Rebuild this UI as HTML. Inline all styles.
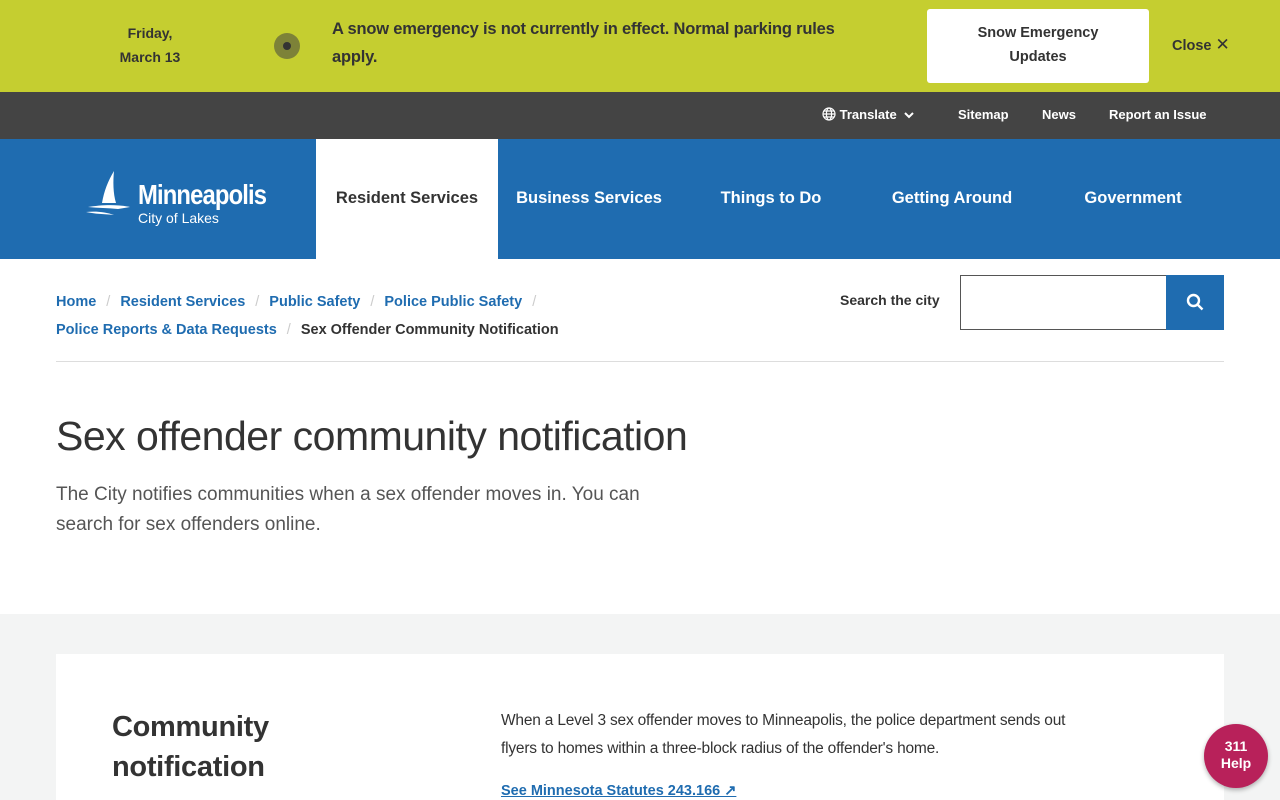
<!DOCTYPE html>
<html><head><meta charset="utf-8"><style>
*{margin:0;padding:0;box-sizing:border-box}
body{width:1280px;height:800px;overflow:hidden;font-family:"Liberation Sans",sans-serif;color:#333;background:#fff;position:relative}
.alert{position:absolute;top:0;left:0;width:1280px;height:92px;background:#c5ce30}
.date{position:absolute;left:100px;top:21px;width:100px;text-align:center;font-weight:bold;font-size:14px;line-height:24px;color:#333}
.dot{position:absolute;left:274px;top:33px;width:26px;height:26px;border-radius:50%;background:#7d8238}
.dot:after{content:"";position:absolute;left:9px;top:9px;width:8px;height:8px;border-radius:50%;background:#333}
.msg{position:absolute;left:332px;top:15px;width:545px;font-size:16.5px;font-weight:bold;line-height:28px;color:#333;letter-spacing:-.2px}
.btn{position:absolute;left:927px;top:9px;width:222px;height:74px;background:#fff;border-radius:3px;text-align:center;font-weight:bold;font-size:14.5px;line-height:24px;padding-top:12px}
.close{position:absolute;left:1172px;top:35px;font-weight:bold;font-size:14.5px}
.util{position:absolute;top:92px;left:0;width:1280px;height:47px;background:#444;color:#fff;font-weight:bold;font-size:13px}
.util span{position:absolute;top:15px}
.nav{position:absolute;top:139px;left:0;width:1280px;height:120px;background:#1f6cb0}
.nav .it{position:absolute;top:0;height:120px;width:182px;line-height:118px;text-align:center;color:#fff;font-weight:bold;font-size:16.5px}
.nav .act{background:#fff;color:#333}
.bc{position:absolute;left:56px;top:288px;font-size:14.5px;font-weight:bold;line-height:28px;color:#1f6cb0}
.bc i{font-style:normal;color:#ccc;font-weight:normal;margin:0 10px}
.bc b{color:#333}
.hr{position:absolute;left:56px;top:361px;width:1168px;height:1px;background:#ddd}
.sl{position:absolute;left:840px;top:292px;font-weight:bold;font-size:14px}
.sb{position:absolute;left:960px;top:275px;width:207px;height:55px;border:1px solid #555;border-right:none}
.sbtn{position:absolute;left:1166px;top:275px;width:58px;height:55px;background:#1f6cb0}
h1{position:absolute;left:56px;top:413px;font-size:41px;font-weight:normal;color:#333;letter-spacing:-.5px}
.lead{position:absolute;left:56px;top:480px;width:630px;font-size:19px;line-height:30px;color:#555}
.gray{position:absolute;top:614px;left:0;width:1280px;height:186px;background:#f3f4f4}
.card{position:absolute;left:56px;top:654px;width:1168px;height:146px;background:#fff}
h2{position:absolute;left:112px;top:707px;font-size:29px;line-height:40px;color:#333;font-weight:bold;letter-spacing:-.3px}
.p{position:absolute;left:501px;top:707px;width:595px;font-size:15.5px;line-height:28px;color:#333;letter-spacing:-.2px}
.lk{position:absolute;left:501px;top:783px;font-size:14.5px;font-weight:bold;color:#1f6cb0;text-decoration:underline}
.help{position:absolute;left:1204px;top:724px;width:64px;height:64px;border-radius:50%;background:#b8215a;color:#fff;text-align:center;font-weight:bold;font-size:14px;line-height:17px;padding-top:14px;box-shadow:0 2px 5px rgba(0,0,0,.3)}
</style></head><body>
<div class="alert">
<div class="date">Friday,<br>March 13</div>
<div class="dot"></div>
<div class="msg">A snow emergency is not currently in effect. Normal parking rules apply.</div>
<div class="btn">Snow Emergency<br>Updates</div>
<div class="close">Close <span style="font-weight:normal;font-size:17px">✕</span></div>
</div>
<div class="util">
<span style="left:822px"><svg width="14" height="14" viewBox="0 0 14 14" style="vertical-align:-2px" fill="none" stroke="#fff" stroke-width="1.2"><circle cx="7" cy="7" r="6"/><ellipse cx="7" cy="7" rx="2.6" ry="6"/><path d="M1 7h12M2 4h10M2 10h10"/></svg> Translate <svg width="10" height="8" viewBox="0 0 10 8" style="margin-left:4px"><path d="M1 2l4 4 4-4" stroke="#fff" stroke-width="2" fill="none"/></svg></span>
<span style="left:958px">Sitemap</span>
<span style="left:1042px">News</span>
<span style="left:1109px">Report an Issue</span>
</div>
<div class="nav">
<svg style="position:absolute;left:86px;top:32px" width="46" height="50" viewBox="0 0 46 50"><path d="M28 0 C22 10 18 20 16 32 L30 32 C27 22 27 10 28 0Z" fill="#fff"/><path d="M2 36 C14 34 30 33 44 36 L32 38 C22 37 12 37 2 36Z M0 41 C10 40 20 41 28 44 C18 43 9 43 0 41Z" fill="#fff"/></svg>
<div style="position:absolute;left:138px;top:40px;color:#fff;font-size:28px;font-weight:bold;letter-spacing:-1px;transform:scaleX(.85);transform-origin:left">Minneapolis</div>
<div style="position:absolute;left:138px;top:71px;color:#fff;font-size:14px">City of Lakes</div>
<div class="it act" style="left:316px">Resident Services</div>
<div class="it" style="left:498px">Business Services</div>
<div class="it" style="left:680px">Things to Do</div>
<div class="it" style="left:861px">Getting Around</div>
<div class="it" style="left:1042px">Government</div>
</div>
<div class="bc">Home<i>/</i>Resident Services<i>/</i>Public Safety<i>/</i>Police Public Safety<i>/</i><br>Police Reports &amp; Data Requests<i>/</i><b>Sex Offender Community Notification</b></div>
<div class="sl">Search the city</div>
<div class="sb"></div>
<div class="sbtn"><svg style="position:absolute;left:20px;top:18px" width="18" height="18" viewBox="0 0 18 18" fill="none" stroke="#fff" stroke-width="2.4"><circle cx="7.5" cy="7.5" r="5.5"/><path d="M11.5 11.5l5 5"/></svg></div>
<div class="hr"></div>
<h1>Sex offender community notification</h1>
<div class="lead">The City notifies communities when a sex offender moves in. You can search for sex offenders online.</div>
<div class="gray"></div>
<div class="card"></div>
<h2>Community<br>notification</h2>
<div class="p">When a Level 3 sex offender moves to Minneapolis, the police department sends out flyers to homes within a three-block radius of the offender's home.</div>
<div class="lk">See Minnesota Statutes 243.166 ↗</div>
<div class="help">311<br>Help</div>
</body></html>
